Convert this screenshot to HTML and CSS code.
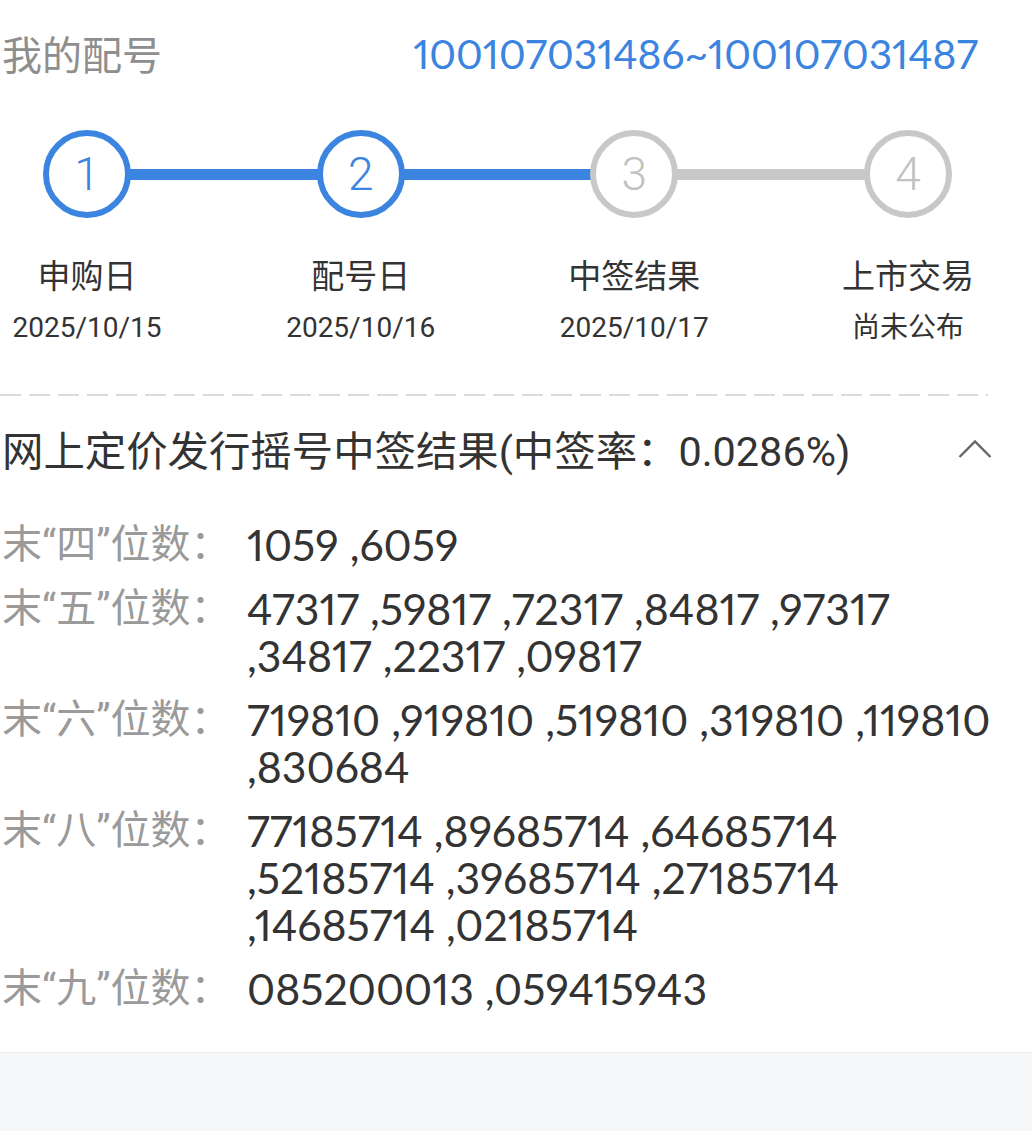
FILE: index.html
```html
<!DOCTYPE html>
<html lang="zh-CN">
<head>
<meta charset="utf-8">
<title>我的配号</title>
<link rel="stylesheet" href="styles.css">
</head>
<body>
<main class="page">
  <header class="header">
    <span class="header-label">我的配号</span>
    <span class="header-value">100107031486~100107031487</span>
  </header>

  <section class="stepper">
    <div class="track">
      <div class="dot dot-active">1</div>
      <div class="bar bar-active"></div>
      <div class="dot dot-active">2</div>
      <div class="bar bar-active"></div>
      <div class="dot">3</div>
      <div class="bar"></div>
      <div class="dot">4</div>
    </div>
    <div class="steps">
      <div class="step"><div class="step-name">申购日</div><div class="step-date">2025/10/15</div></div>
      <div class="step"><div class="step-name">配号日</div><div class="step-date">2025/10/16</div></div>
      <div class="step"><div class="step-name">中签结果</div><div class="step-date">2025/10/17</div></div>
      <div class="step"><div class="step-name">上市交易</div><div class="step-date step-pending">尚未公布</div></div>
    </div>
  </section>

  <div class="dash"></div>

  <section class="result">
    <div class="result-head">
      <h2 class="result-title">网上定价发行摇号中签结果(中签率：0.0286%)</h2>
      <svg class="chevron" width="34" height="20" viewBox="0 0 34 20" aria-hidden="true">
        <polyline points="1.5,18 17,2.5 32.5,18" fill="none" stroke="#666" stroke-width="2.4"/>
      </svg>
    </div>
    <dl class="rows">
      <div class="row"><dt class="row-label">末“四”位数：</dt><dd class="row-value">1059 ,6059</dd></div>
      <div class="row"><dt class="row-label">末“五”位数：</dt><dd class="row-value">47317 ,59817 ,72317 ,84817 ,97317<br>,34817 ,22317 ,09817</dd></div>
      <div class="row"><dt class="row-label">末“六”位数：</dt><dd class="row-value">719810 ,919810 ,519810 ,319810 ,119810<br>,830684</dd></div>
      <div class="row"><dt class="row-label">末“八”位数：</dt><dd class="row-value">77185714 ,89685714 ,64685714<br>,52185714 ,39685714 ,27185714<br>,14685714 ,02185714</dd></div>
      <div class="row"><dt class="row-label">末“九”位数：</dt><dd class="row-value">085200013 ,059415943</dd></div>
    </dl>
  </section>
</main>
</body>
</html>
```

FILE: styles.css
```css
* { box-sizing: border-box; }

html, body {
  margin: 0;
  padding: 0;
}

body {
  background: #f6f7f9;
  font-family: Roboto, "Noto Sans CJK SC", sans-serif;
  color: #333;
}

.page {
  background: #fff;
  padding: 25px 0 40px 2px;
  border-bottom: 1px solid #ececec;
}

.header {
  display: flex;
  justify-content: space-between;
  align-items: center;
  padding-right: 54px;
  height: 56px;
}

.header-label {
  font-size: 40px;
  color: #8e8e8e;
}

.header-value {
  font-family: Lato, Roboto, sans-serif;
  font-feature-settings: "pnum" 1;
  font-size: 40.7px;
  color: #3b84e0;
}

.stepper {
  margin-top: 49px;
}

.track {
  display: flex;
  align-items: center;
  margin: 0 80px 0 41px;
}

.dot {
  width: 88px;
  height: 88px;
  flex: none;
  border: 6px solid #c8c8c8;
  border-radius: 50%;
  display: flex;
  align-items: center;
  justify-content: center;
  font-size: 46px;
  font-weight: 300;
  color: #c2c2c2;
  background: #fff;
}

.dot-active {
  border-color: #3b84e0;
  color: #3b84e0;
}

.bar {
  flex: 1;
  height: 11px;
  background: #c8c8c8;
  margin: 0 -1px;
}

.bar-active {
  background: #3b84e0;
}

.steps {
  display: flex;
  justify-content: space-between;
  margin: 39px 44px 0 5px;
}

.step {
  width: 160px;
  text-align: center;
}

.step-name {
  font-size: 33px;
  line-height: 40px;
  color: #333;
}

.step-date {
  margin-top: 13px;
  font-size: 28px;
  line-height: 36px;
  color: #333;
}

.dash {
  height: 2px;
  margin: 48px 44px 0 -2px;
  background: repeating-linear-gradient(to right, #dadada 0 21px, transparent 21px 29px);
}

.result-head {
  display: flex;
  align-items: center;
  justify-content: space-between;
  margin-top: 28px;
  padding-right: 40px;
  height: 56px;
}

.result-title {
  margin: 0;
  font-size: 41.4px;
  font-weight: 400;
  color: #333;
  line-height: 56px;
}

.chevron {
  display: block;
  margin-top: -6px;
}

.rows {
  margin: 41px 0 0;
  display: flex;
  flex-direction: column;
  gap: 17px;
}

.row {
  display: flex;
  font-size: 40px;
  line-height: 47px;
}

.row-label {
  width: 245px;
  flex: none;
  color: #9a9a9a;
}

.row-value {
  margin: 0;
  color: #333;
  font-family: Lato, Roboto, sans-serif;
  font-feature-settings: "pnum" 1;
  font-size: 42.8px;
}
```
